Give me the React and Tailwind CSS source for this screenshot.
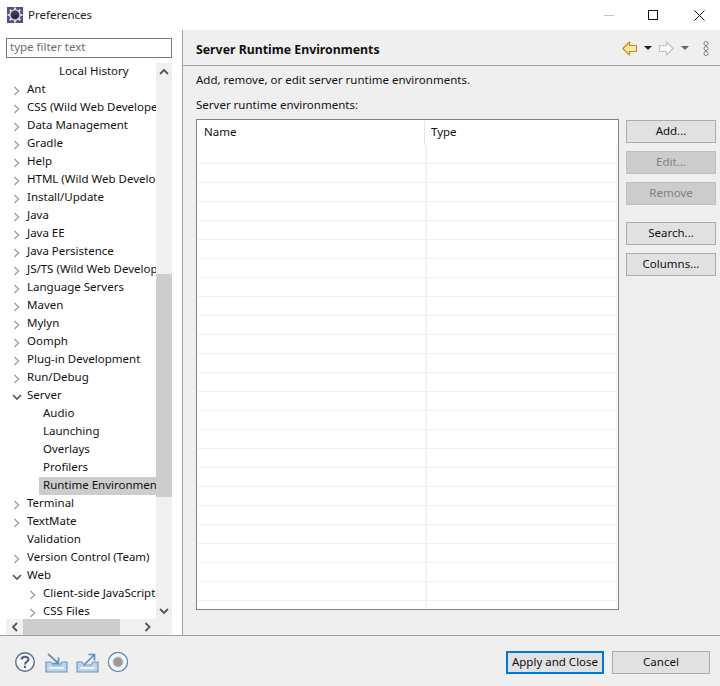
import React from "react";

const tree = [
  { t: "Local History", indent: 59, arrow: null },
  { t: "Ant", indent: 27, arrow: "r" },
  { t: "CSS (Wild Web Developer)", indent: 27, arrow: "r" },
  { t: "Data Management", indent: 27, arrow: "r" },
  { t: "Gradle", indent: 27, arrow: "r" },
  { t: "Help", indent: 27, arrow: "r" },
  { t: "HTML (Wild Web Developer)", indent: 27, arrow: "r" },
  { t: "Install/Update", indent: 27, arrow: "r" },
  { t: "Java", indent: 27, arrow: "r" },
  { t: "Java EE", indent: 27, arrow: "r" },
  { t: "Java Persistence", indent: 27, arrow: "r" },
  { t: "JS/TS (Wild Web Developer)", indent: 27, arrow: "r" },
  { t: "Language Servers", indent: 27, arrow: "r" },
  { t: "Maven", indent: 27, arrow: "r" },
  { t: "Mylyn", indent: 27, arrow: "r" },
  { t: "Oomph", indent: 27, arrow: "r" },
  { t: "Plug-in Development", indent: 27, arrow: "r" },
  { t: "Run/Debug", indent: 27, arrow: "r" },
  { t: "Server", indent: 27, arrow: "d" },
  { t: "Audio", indent: 43 },
  { t: "Launching", indent: 43 },
  { t: "Overlays", indent: 43 },
  { t: "Profilers", indent: 43 },
  { t: "Runtime Environments", indent: 43, sel: true },
  { t: "Terminal", indent: 27, arrow: "r" },
  { t: "TextMate", indent: 27, arrow: "r" },
  { t: "Validation", indent: 27 },
  { t: "Version Control (Team)", indent: 27, arrow: "r" },
  { t: "Web", indent: 27, arrow: "d" },
  { t: "Client-side JavaScript", indent: 43, arrow: "r" },
  { t: "CSS Files", indent: 43, arrow: "r" },
];

function Chevron({ dir, color = "#a6a6a6", w = 1.6 }) {
  const paths = {
    r: "M2.5 1 L6.5 5 L2.5 9",
    l: "M7 1 L3 5 L7 9",
    d: "M1 3 L5 7 L9 3",
    u: "M1 7 L5 3 L9 7",
  };
  return (
    <svg width="10" height="10" viewBox="0 0 10 10" className="block shrink-0">
      <path d={paths[dir]} fill="none" stroke={color} strokeWidth={w} />
    </svg>
  );
}

function Row({ item }) {
  return (
    <div className="h-[18px] pb-[2px] flex items-center relative whitespace-nowrap text-[#111]">
      {item.arrow && (
        <span
          className="absolute top-[5px]"
          style={{ left: item.indent - 21 }}
        >
          <Chevron dir={item.arrow === "r" ? "r" : "d"} color={item.arrow === "r" ? "#a8a8a8" : "#555"} />
        </span>
      )}
      {item.sel && <span className="absolute left-[33px] right-0 top-0 bottom-0 bg-[#cccccc]" />}
      <span className="relative" style={{ marginLeft: item.indent - 6 }}>
        {item.t}
      </span>
    </div>
  );
}

function Btn({ children, disabled, className = "" }) {
  return (
    <div
      className={
        "w-[90px] h-[23px] pb-[2px] border flex items-center justify-center " +
        (disabled
          ? "bg-[#cccccc] border-[#bfbfbf] text-[#838383] "
          : "bg-[#e1e1e1] border-[#adadad] text-[#111] ") +
        className
      }
    >
      {children}
    </div>
  );
}

function AppIcon() {
  return (
    <svg width="16" height="16" viewBox="0 0 16 16" className="block">
      <rect x="0" y="0" width="16" height="16" fill="#5b4a86" />
      <g stroke="#d9d9de" strokeWidth="2.2">
        <path d="M8 0.5 V15.5 M0.5 8 H15.5 M2.7 2.7 L13.3 13.3 M13.3 2.7 L2.7 13.3" />
      </g>
      <circle cx="8" cy="8" r="5.8" fill="#d9d9de" />
      <circle cx="8" cy="8" r="4.4" fill="#2c2a3e" />
      <path d="M3.8 8 a4.2 4.2 0 0 1 8.4 0 z" fill="#3d3a55" />
    </svg>
  );
}

function ArrowNav({ dir, active }) {
  const d =
    dir === "l"
      ? "M0.8 7.5 L7.5 1 V4.5 H14.5 V10.5 H7.5 V14 Z"
      : "M14.2 7.5 L7.5 1 V4.5 H0.5 V10.5 H7.5 V14 Z";
  return (
    <svg width="15" height="15" viewBox="0 0 15 15" className="block">
      <path
        d={d}
        fill={active ? "#fde7a6" : "#fafafa"}
        stroke={active ? "#c98a1b" : "#c4c4c4"}
        strokeWidth="1.2"
        strokeLinejoin="round"
      />
    </svg>
  );
}

function Drop({ color }) {
  return (
    <svg width="8" height="4" viewBox="0 0 8 4" className="block">
      <path d="M0 0 H8 L4 4 Z" fill={color} />
    </svg>
  );
}

function HelpIcon() {
  return (
    <svg width="22" height="22" viewBox="0 0 22 22" className="block">
      <circle cx="11" cy="11" r="9.3" fill="#f4f6f9" stroke="#5a6d8f" strokeWidth="1.4" />
      <path d="M7.6 8.6 C7.6 4.8 14.4 4.8 14.4 8.4 C14.4 10.8 11 10.8 11 13.4" fill="none" stroke="#4c5c7a" strokeWidth="2" />
      <rect x="9.9" y="14.8" width="2.2" height="2.2" fill="#4c5c7a" />
    </svg>
  );
}

function TrayIcon({ out }) {
  return (
    <svg width="23" height="20" viewBox="0 0 23 20" className="block">
      <path d="M1 9 H6 L8 12 H15 L17 9 H22 V19 H1 Z" fill="#bcd3e8" stroke="#6f9bc4" strokeWidth="1.2" />
      <rect x="4" y="14" width="15" height="2" fill="#eaf2f9" />
      {out ? (
        <path d="M8 12 L18 2 M12.5 1.5 H18.5 V7.5" fill="none" stroke="#5f93bf" strokeWidth="1.7" />
      ) : (
        <path d="M3 1 L13 10 M13.5 4.5 V10.5 H7.5" fill="none" stroke="#5f93bf" strokeWidth="1.7" />
      )}
    </svg>
  );
}

function RecordIcon() {
  return (
    <svg width="22" height="22" viewBox="0 0 22 22" className="block">
      <circle cx="11" cy="11" r="9.6" fill="#f6f8fb" stroke="#4d86b5" strokeWidth="1.2" />
      <circle cx="11" cy="11" r="5" fill="#9a9a9a" stroke="#c4c4c4" strokeWidth="1" />
    </svg>
  );
}

export default function App() {
  return (
    <div
      className="w-[720px] h-[686px] flex flex-col bg-white text-[11.5px] overflow-hidden"
      style={{ fontFamily: '"Noto Sans", "Noto Sans CJK KR", sans-serif' }}
    >
      {/* title bar */}
      <div className="h-[30px] shrink-0 flex items-center pl-[7px]">
        <AppIcon />
        <span className="ml-[5px] text-[#222]">Preferences</span>
        <div className="ml-auto flex items-center">
          <svg width="10" height="10" viewBox="0 0 10 10" className="block mr-[34px]">
            <path d="M0 5.5 H10" stroke="#c4c4c4" strokeWidth="1" />
          </svg>
          <svg width="10" height="10" viewBox="0 0 10 10" className="block mr-[36px]">
            <rect x="0.5" y="0.5" width="9" height="9" fill="none" stroke="#111" strokeWidth="1" />
          </svg>
          <svg width="11" height="11" viewBox="0 0 11 11" className="block mr-[15px]">
            <path d="M0.5 0.5 L10.5 10.5 M10.5 0.5 L0.5 10.5" stroke="#111" strokeWidth="1" />
          </svg>
        </div>
      </div>

      <div className="h-[605px] shrink-0 flex">
        {/* left */}
        <div className="w-[182px] shrink-0 bg-white pl-[6px] pr-[10px] pt-[8px] flex flex-col">
          <div className="h-[20px] shrink-0 border border-[#7a7a7a] flex items-center pl-[3px] pb-[2px] text-[#6d6d6d]">
            type filter text
          </div>
          <div className="mt-[5px] h-[556px] shrink-0 flex">
            <div className="w-[150px] shrink-0 overflow-hidden">
              {tree.map((it) => (
                <Row key={it.t} item={it} />
              ))}
            </div>
            <div className="w-[16px] shrink-0 bg-[#f0f0f0] flex flex-col items-center relative">
              <div className="h-[17px] shrink-0 flex items-center justify-center">
                <Chevron dir="u" color="#555" w={1.8} />
              </div>
              <div className="w-[16px] h-[223px] mt-[194px] bg-[#cdcdcd]" />
              <div className="mt-auto h-[17px] shrink-0 flex items-center justify-center">
                <Chevron dir="d" color="#555" w={1.8} />
              </div>
            </div>
          </div>
          <div className="h-[16px] shrink-0 bg-[#f0f0f0] flex items-center">
            <div className="w-[17px] shrink-0 flex justify-center">
              <Chevron dir="l" color="#555" w={1.8} />
            </div>
            <div className="w-[97px] h-full bg-[#cdcdcd]" />
            <div className="ml-auto w-[17px] mr-[16px] shrink-0 flex justify-center">
              <Chevron dir="r" color="#555" w={1.8} />
            </div>
          </div>
        </div>

        <div className="w-px shrink-0 bg-[#a0a0a0]" />

        {/* right */}
        <div className="flex-1 bg-[#efefef] flex flex-col">
          <div className="h-[36px] shrink-0 border-b border-[#a0a0a0] flex items-center pl-[13px] pr-[11px] pt-px">
            <span className="font-bold text-[#111] text-[12.3px] mt-[4px]">Server Runtime Environments</span>
            <div className="ml-auto flex items-center">
              <ArrowNav dir="l" active />
              <span className="ml-[7px]"><Drop color="#222" /></span>
              <span className="ml-[7px]"><ArrowNav dir="r" /></span>
              <span className="ml-[7px]"><Drop color="#666" /></span>
              <svg width="6" height="15" viewBox="0 0 6 15" className="block ml-[14px]">
                <g fill="#fff" stroke="#777" strokeWidth="1">
                  <circle cx="3" cy="2.5" r="2" />
                  <circle cx="3" cy="7.5" r="2" />
                  <circle cx="3" cy="12.5" r="2" />
                </g>
              </svg>
            </div>
          </div>
          <div className="pl-[13px] mt-[5px] h-[18px] flex items-center text-[#111]">
            Add, remove, or edit server runtime environments.
          </div>
          <div className="pl-[13px] mt-[7px] h-[18px] flex items-center text-[#111]">
            Server runtime environments:
          </div>
          <div className="flex pl-[13px] mt-[5px]">
            {/* table */}
            <div className="w-[423px] h-[491px] shrink-0 border border-[#82828a] bg-white pt-px px-px overflow-hidden">
              <div className="h-[24px] flex text-[#111]">
                <div className="w-[227px] shrink-0 border-r border-[#e5e5e5] pl-[6px] pb-[2px] flex items-center">Name</div>
                <div className="pl-[6px] pb-[2px] flex items-center">Type</div>
              </div>
              <div className="flex h-[463px]">
                <div className="w-[227px] shrink-0 h-full">
                  {Array.from({ length: 24 }).map((_, i) => (
                    <div key={i} className="h-[19px] border-b border-[#f0f0f0]" />
                  ))}
                </div>
                <div className="w-[2px] shrink-0 h-full bg-[#edf2fa]" />
                <div className="flex-1 h-full">
                  {Array.from({ length: 24 }).map((_, i) => (
                    <div key={i} className="h-[19px] border-b border-[#f0f0f0]" />
                  ))}
                </div>
                <div className="w-px shrink-0 h-full bg-[#edf2fa]" />
              </div>
            </div>
            {/* buttons */}
            <div className="ml-[7px] pt-px flex flex-col">
              <Btn>Add...</Btn>
              <Btn disabled className="mt-[8px]">Edit...</Btn>
              <Btn disabled className="mt-[8px]">Remove</Btn>
              <Btn className="mt-[17px]">Search...</Btn>
              <Btn className="mt-[8px]">Columns...</Btn>
            </div>
          </div>
        </div>
      </div>

      {/* bottom */}
      <div className="flex-1 bg-[#efefef] border-t border-[#a0a0a0] flex items-start pl-[14px] pt-[15px]">
        <HelpIcon />
        <span className="ml-[9px] mt-[2px]"><TrayIcon /></span>
        <span className="ml-[8px] mt-[2px]"><TrayIcon out /></span>
        <span className="ml-[8px]"><RecordIcon /></span>
        <div className="ml-auto flex mr-[10px]">
          <div className="w-[98px] h-[23px] pb-[2px] border-2 border-[#0078d7] bg-[#e1e1e1] flex items-center justify-center text-[#111]">
            Apply and Close
          </div>
          <div className="ml-[8px] w-[98px] h-[23px] pb-[2px] border border-[#adadad] bg-[#e1e1e1] flex items-center justify-center text-[#111]">
            Cancel
          </div>
        </div>
      </div>
    </div>
  );
}
